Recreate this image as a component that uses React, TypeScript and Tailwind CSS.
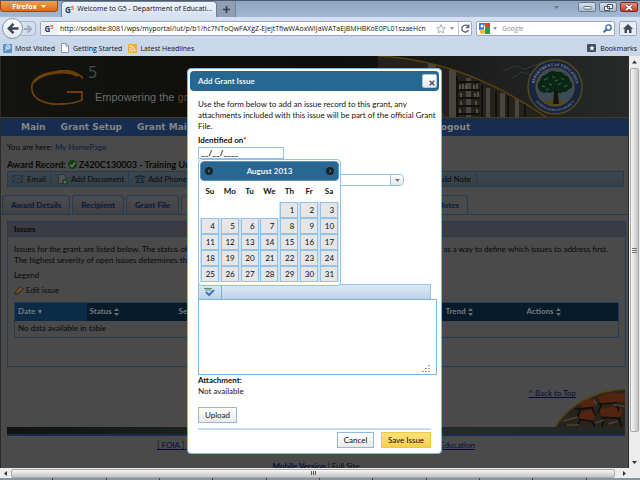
import { useState } from 'react';

const weekDays = ['Su', 'Mo', 'Tu', 'We', 'Th', 'Fr', 'Sa'];
const FIRST_WEEKDAY = 4;
const DAYS_IN_MONTH = 31;

const buildWeeks = () => {
  const weeks: (number | null)[][] = [];
  for (let start = 1 - FIRST_WEEKDAY; start <= DAYS_IN_MONTH; start += 7) {
    weeks.push(
      Array.from({ length: 7 }, (_, i) => {
        const day = start + i;
        return day >= 1 && day <= DAYS_IN_MONTH ? day : null;
      })
    );
  }
  return weeks;
};

const GLogo = () => (
  <span className="font-['Open_Sans',sans-serif] text-[8px] leading-3 font-bold text-[#1d3a6b]">
    G<sup className="text-[6px] leading-none text-[#e8641b]">5</sup>
  </span>
);

const FirefoxChrome = () => (
  <header className="shrink-0 bg-[#c9d7ea] font-['Open_Sans','Noto_Sans',sans-serif] text-[7px] text-[#111]">
    <div className="flex h-[17px] items-start border-t border-[#4d5a6b] bg-linear-to-b from-[#8ea5c1] to-[#a3b8d1]">
      <button className="flex h-[11px] w-[58px] shrink-0 items-center justify-center gap-1 rounded-b border border-t-0 border-[#9c4a10] bg-linear-to-b from-[#f0a04c] to-[#dd6a12] text-[7px] leading-none font-bold text-white">
        Firefox
        <svg className="h-[3px] w-[5px]" viewBox="0 0 5 3" fill="#fff"><path d="M0 0h5L2.5 3z" /></svg>
      </button>
      <div className="ml-[3px] flex h-4 w-[156px] shrink-0 items-center gap-[3px] overflow-hidden rounded-t border border-b-0 border-[#6d7f97] bg-linear-to-b from-[#eef3fa] to-[#d5e0f0] px-[3px] whitespace-nowrap">
        <GLogo />
        <span>Welcome to G5 - Department of Educati...</span>
      </div>
      <button aria-label="New tab" className="flex h-4 w-[19px] items-center justify-center border-r border-[#73839a] bg-[#8f9db5]">
        <svg className="h-[7px] w-[7px]" viewBox="0 0 7 7"><path d="M3.5 0v7M0 3.5h7" stroke="#333c4b" strokeWidth="1.5" /></svg>
      </button>
      <div className="ml-auto flex gap-[3px] pt-px pr-[2px]">
        <svg className="mt-1 mr-4 h-[3px] w-[5px]" viewBox="0 0 5 3" fill="#6a7480"><path d="M0 0h5L2.5 3z" /></svg>
        <button aria-label="Minimize" className="flex h-[10px] w-[18px] items-center justify-center rounded-xs border border-[#6c7c92] bg-linear-to-b from-[#d5dfeb] to-[#a9b9cd]">
          <svg className="h-[5px] w-[9px]" viewBox="0 0 9 5"><rect x="1" y="1.5" width="7" height="2.5" rx=".5" fill="#fff" stroke="#4b5563" strokeWidth=".8" /></svg>
        </button>
        <button aria-label="Restore" className="flex h-[10px] w-[18px] items-center justify-center rounded-xs border border-[#6c7c92] bg-linear-to-b from-[#d5dfeb] to-[#a9b9cd]">
          <svg className="h-[7px] w-[9px]" viewBox="0 0 9 7" fill="#fff" stroke="#4b5563"><path d="M3.5 .5h5v4h-5zM.5 2.5h5v4h-5z" /></svg>
        </button>
        <button aria-label="Close window" className="flex h-[10px] w-[18px] items-center justify-center rounded-xs border border-[#7c2b22] bg-linear-to-b from-[#e08d7b] to-[#c03a25]">
          <svg className="h-[7px] w-[8px]" viewBox="0 0 8 7"><path d="M1 1l6 5M7 1L1 6" stroke="#7b3028" strokeWidth="3" /><path d="M1 1l6 5M7 1L1 6" stroke="#fff" strokeWidth="1.7" /></svg>
        </button>
      </div>
    </div>

    <div className="flex h-[23px] items-center bg-linear-to-b from-[#d5e0f0] to-[#c9d7ea] px-[2px]">
      <button aria-label="Back" className="z-10 flex size-[21px] shrink-0 items-center justify-center rounded-full border border-[#8593a8] bg-linear-to-b from-white to-[#dfe7f1]">
        <svg className="h-[11px] w-[12px]" viewBox="0 0 12 11" fill="none" stroke="#3b4653" strokeWidth="2.4"><path d="M6.5 .8L1.8 5.5l4.7 4.7M2 5.5h9.5" /></svg>
      </button>
      <button aria-label="Forward" className="-ml-1 flex h-[15px] w-[17px] shrink-0 items-center justify-center rounded-r border border-[#a5b4c9] bg-[#d4dfee]">
        <svg className="h-[8px] w-[8px]" viewBox="0 0 8 8" fill="none" stroke="#9aabc2" strokeWidth="2"><path d="M3.5 .5L7 4 3.5 7.5M7 4H0" /></svg>
      </button>
      <div className="ml-1 flex h-[15px] min-w-0 flex-1 items-center rounded-xs border border-[#9aa9bf] bg-white">
        <span className="flex h-[13px] w-[16px] items-center justify-center bg-[#eef1f5]"><GLogo /></span>
        <input
          aria-label="Address"
          className="min-w-0 flex-1 pl-[3px] text-[7px] leading-3 outline-none"
          defaultValue="http://sodalite:8081/wps/myportal/!ut/p/b1/hc7NToQwFAXgZ-EJejtTflwWAoxWIJaWATaEjBMHBKoE0PL01szaeHcn"
        />
        <svg className="mx-1 h-[10px] w-[10px] shrink-0" viewBox="0 0 20 20"><path d="M10 1l2.700 6 6.300.6-4.800 4.200 1.500 6.400L10 15l-5.700 3.200 1.500-6.400L1 7.600l6.300-.6z" fill="#f2f4f6" stroke="#9ba3ab" strokeWidth="1.600" /></svg>
        <svg className="mr-1 h-[3px] w-[4px] shrink-0" viewBox="0 0 4 3" fill="#8b8f95"><path d="M0 0h4L2 3z" /></svg>
        <button aria-label="Reload" className="flex h-[13px] w-[13px] shrink-0 items-center justify-center border-l border-[#c1c9d4]">
          <svg className="h-[9px] w-[9px]" viewBox="0 0 9 9" fill="none" stroke="#5b626c" strokeWidth="1.3"><path d="M7.600 6A3.500 3.500 0 1 1 7 2.200M7.800 .5v3H5" /></svg>
        </button>
      </div>
      <div className="ml-1 flex h-[15px] w-[139px] shrink-0 items-center rounded-xs border border-[#9aa9bf] bg-white pr-[2px]">
        <svg className="ml-[2px] h-[11px] w-[11px] shrink-0" viewBox="0 0 11 11"><path fill="#e33b2e" d="M5 0h6v4H6z" /><path fill="#2f9a4a" d="M6 4h5v7H6z" /><path fill="#3c78d0" d="M0 0h5v7H0z" /><circle cx="3" cy="3" r="1.500" fill="#fff" /><circle cx="3.500" cy="8.500" r="2.500" fill="#f4b42c" /></svg>
        <svg className="mx-[3px] h-[3px] w-[4px] shrink-0" viewBox="0 0 4 3" fill="#8b8f95"><path d="M0 0h4L2 3z" /></svg>
        <input aria-label="Search" placeholder="Google" className="min-w-0 flex-1 pl-[2px] text-[7px] leading-3 italic outline-none placeholder:text-[#858b92]" />
        <svg className="h-[9px] w-[9px] shrink-0" viewBox="0 0 9 9" fill="none" stroke="#2f62a5"><circle cx="5.500" cy="3.500" r="2.700" strokeWidth="1.300" /><path d="M3.500 5.500L.6 8.400" strokeWidth="1.800" /></svg>
      </div>
      <button aria-label="Home" className="mr-px ml-1 flex h-[15px] w-[18px] shrink-0 items-center justify-center rounded-xs border border-[#9aa9bf] bg-[#e7edf5]">
        <svg className="h-[9px] w-[10px]" viewBox="0 0 10 9" fill="#454c56"><path d="M5 0l5 4.700H8.500V9h-2.500V6H4v3H1.500V4.700H0z" /></svg>
      </button>
    </div>

    <nav className="flex h-4 items-center gap-[6px] px-[3px] leading-none">
      <a href="#" className="flex items-center gap-[3px]">
        <svg className="h-[9px] w-[9px]" viewBox="0 0 9 9"><rect width="9" height="9" rx="1" fill="#5b95c8" /><path d="M2 7l2-3M6.500 2.500L4 4" stroke="#d9ebf8" /><circle cx="5" cy="3" r="2" fill="none" stroke="#e8f3fb" /></svg>
        Most Visited
      </a>
      <a href="#" className="flex items-center gap-1">
        <svg className="h-[10px] w-[8px]" viewBox="0 0 8 10"><path d="M.5.5H5L7.500 3v6.500h-7z" fill="#fff" stroke="#8d959f" /><path d="M5 .5V3h2.500" fill="none" stroke="#8d959f" /></svg>
        Getting Started
      </a>
      <a href="#" className="flex items-center gap-[3px]">
        <svg className="h-[9px] w-[9px]" viewBox="0 0 9 9"><rect width="9" height="9" rx="1" fill="#f0ab45" /><path d="M1.500 4.500a3 3 0 0 1 3 3M1.500 2a5.500 5.500 0 0 1 5.500 5.500" fill="none" stroke="#fff" /><circle cx="2" cy="7" r=".8" fill="#fff" /></svg>
        Latest Headlines
      </a>
      <a href="#" className="ml-auto flex items-center gap-1">
        <svg className="h-[8px] w-[9px]" viewBox="0 0 9 8"><rect width="9" height="8" rx="1" fill="#46505d" /><path d="M5 1.500l.8 1.700 1.800.2-1.400 1.200.5 1.900L5 5.500l-1.700 1 .5-1.900-1.400-1.200 1.800-.2z" fill="#fff" /></svg>
        Bookmarks
      </a>
    </nav>
  </header>
);

const Seal = () => (
  <svg className="absolute top-[3px] right-[45px] size-[56px]" viewBox="0 0 56 56">
    <defs>
      <path id="sealTop" d="M8.300 35.200A21 21 0 1 1 47.700 35.200" />
      <path id="sealBottom" d="M4 28a24 24 0 0 0 48 0" />
    </defs>
    <circle cx="28" cy="28" r="27" fill="#172541" stroke="#55481c" strokeWidth="1.500" />
    <circle cx="28" cy="28" r="19" fill="#3c4b57" stroke="#5b5230" />
    <text fontSize="4" fontWeight="bold" fill="#8a919c" fontFamily="Liberation Serif, serif">
      <textPath href="#sealTop" startOffset="50%" textAnchor="middle">DEPARTMENT OF EDUCATION</textPath>
    </text>
    <text fontSize="3" fontWeight="bold" fill="#7c8799" fontFamily="Liberation Serif, serif">
      <textPath href="#sealBottom" startOffset="50%" textAnchor="middle">UNITED STATES OF AMERICA</textPath>
    </text>
    <path d="M17 43q10-6 22 0l-4 2.500q-7 1.500-14 0z" fill="#55481c" />
    <path d="M26 45l1-12-6-6 1-1 6 4 1-6 1 6 6-4 1 1-6 6 1 12z" fill="#17130b" />
    <path d="M11 27c-1-4 3-5 3-8 2-4 6-3 8-6 4-2 6 0 9 0 4-1 6 3 9 4 3 2 2 5 5 7 1 4-1 6-4 7-2 3-5 1-7 3-3 1-4-2-6-3-2 2-5 4-8 2-4 2-9-1-9-6z" fill="#0b2514" />
    <path d="M17 21l4-2M25 17l3 2M34 19l3 2M15 27l3 1M22 25l3 1M31 26l3-2M37 28l3-2M28 22l3-1M19 31l3-1" stroke="#2b5634" strokeWidth="1.500" />
  </svg>
);

const Banner = () => (
  <div className="relative h-[61px] overflow-hidden bg-linear-to-r from-[#13130f] via-[#0d0d0d] to-[#1f2424]">
    <svg className="absolute top-[14px] left-[28px] h-[37px] w-[58px]" viewBox="0 0 58 37" fill="none" stroke="#6c4008">
      <path d="M54 8C46 1 36-1 26 2 11 4 1 10 3 20c1 10 15 15 29 14 8 0 15-1 21-4V22H38" strokeWidth="1.800" />
      <path d="M49 6C36-1 12 3 5 12" strokeWidth="2.500" />
    </svg>
    <span className="absolute top-[11px] left-[87px] font-['DejaVu_Sans',sans-serif] text-[15px] leading-3 text-[#42464a]">5</span>
    <p className="absolute top-[35px] left-[94px] font-['Liberation_Sans',sans-serif] text-[11px] leading-3 whitespace-nowrap text-[#6c6c6c]">
      Empowering the <span className="text-[#70420b]">grants</span>
    </p>
    <svg className="absolute top-0 right-0 h-[61px] w-[250px]" viewBox="0 0 250 61">
      <defs>
        <linearGradient id="wall" x1="0" x2="1"><stop offset="0" stopColor="#161614" /><stop offset="1" stopColor="#272a29" /></linearGradient>
        <clipPath id="shelf"><path d="M0 0q86 4 168 61H0z" /></clipPath>
      </defs>
      <rect width="250" height="61" fill="url(#wall)" />
      <g clipPath="url(#shelf)">
        <rect width="170" height="61" fill="#25221d" />
        <path d="M50 5h8v56h-8zM71 14h7v47h-7zM88 22h5v39h-5zM108 32h4v29h-4zM122 37h5v24h-5zM137 42h4v19h-4z" fill="#494641" />
        <path d="M63 15v46M79 20v41M104 29v32M118 35v26M130 40v21M147 46v15" stroke="#11100d" strokeWidth="2" />
        <path d="M80 26h22M80 34h22M80 42h22M80 50h22M80 58h22" stroke="#11100d" strokeWidth="2" />
        <path d="M82 29v4M85 28v5M88 29v4M96 29v4M99 28v5M83 37v4M97 37v4M100 36v5M83 45v4M98 45v4M82 53v4M99 53v4" stroke="#67604f" strokeWidth="1.500" />
        <path d="M50 32q8 12 16 29" stroke="#554218" fill="none" />
      </g>
      <path d="M0 0q86 4 168 61" fill="none" stroke="#56410e" strokeWidth="1.500" />
      <path d="M125 15l12-5 10 3 18-7M134 22l10-6 9 3" stroke="#343a3a" fill="none" />
    </svg>
    <Seal />
  </div>
);

const SortIcon = () => (
  <svg className="ml-[2px] inline h-[8px] w-[5px]" viewBox="0 0 5 8" fill="#666e73"><path d="M2.500 0L5 3H0zM0 5h5L2.500 8z" /></svg>
);

const G5Page = () => (
  <main className="min-h-full border-x border-[#2b2b2b] bg-[#4a4a4a] font-['Lato',sans-serif] text-[8px] leading-[11px] whitespace-nowrap text-[#080808]">
    <Banner />
    <nav className="flex h-[19px] items-center border-t border-[#4b3c18] bg-[#172d50] font-['DejaVu_Sans',sans-serif] text-[9px] font-bold text-[#858585]">
      <div className="flex w-[434px] shrink-0 gap-[15px] overflow-hidden pl-5">
        <a href="#">Main</a>
        <a href="#">Grant Setup</a>
        <a href="#">Grant Maintenance</a>
      </div>
      <a href="#">Logout</a>
    </nav>
    <p className="px-[6px] pt-[6px]">
      You are here: <a href="#" className="text-[#0b1c3f]">My HomePage</a>
    </p>
    <h1 className="flex items-center gap-[2px] px-[6px] pt-[6px] text-[9px] font-bold">
      Award Record:
      <svg className="h-[9px] w-[9px]" viewBox="0 0 9 9"><circle cx="4.500" cy="4.500" r="4.500" fill="#123d0e" /><path d="M2 4.700l2 2L7 2.500" fill="none" stroke="#6d776c" strokeWidth="1.300" /></svg>
      <span>Z420C130003 - Training University</span>
    </h1>

    <div className="mt-px mr-1 ml-[6px] flex h-[16px] border border-[#243b53] bg-linear-to-b from-[#3f464c] to-[#344047]">
      <div className="flex w-[419px] shrink-0 overflow-hidden">
        <button className="flex items-center gap-1 border-r border-[#243b53] px-1">
          <svg className="h-[8px] w-[11px]" viewBox="0 0 11 8" fill="none" stroke="#1f3448"><path d="M.5.5h10v7H.5zM.5.5l5 4 5-4M.5 7.500l3.500-4M10.500 7.500L7 3.500" /></svg>
          Email
        </button>
        <button className="flex items-center gap-[3px] border-r border-[#243b53] pr-1 pl-[7px]">
          <svg className="h-[11px] w-[10px]" viewBox="0 0 10 11"><path d="M.5.5h5l2 2v7h-7z" fill="#505456" stroke="#303436" /><circle cx="7" cy="8" r="2.800" fill="#26381b" /><path d="M7 6.500v3M5.500 8h3" stroke="#6d776c" /></svg>
          Add Document
        </button>
        <button className="flex items-center gap-[3px] pl-[6px]">
          <svg className="h-[8px] w-[10px]" viewBox="0 0 10 8" fill="#182838"><path d="M0 3V1.500Q5-1 10 1.500V3H7.500V2h-5v1z" /><path d="M2.500 3h5L9 8H1z" /><path d="M3.500 4.500h3M3.500 6h3" stroke="#55606a" strokeWidth=".8" /></svg>
          Add Phone Call
        </button>
      </div>
      <button className="w-[50px] border-r border-[#243b53] px-[5px] text-right">Add Note</button>
    </div>

    <div className="mt-2 flex items-end border-b border-[#243b53] pl-px font-bold text-[#0b1c3f]">
      <div className="flex w-[438px] shrink-0 items-end gap-[2px] overflow-hidden">
        {['Award Details', 'Recipient', 'Grant File'].map((tab) => (
          <button key={tab} className="h-[19px] shrink-0 rounded-t-sm border border-b-0 border-[#243b53] bg-linear-to-b from-[#4a4c4f] to-[#3f4144] px-2 font-black">{tab}</button>
        ))}
        <button className="h-[19px] shrink-0 rounded-t-sm border border-b-0 border-[#243b53] px-2 font-black">Issues</button>
      </div>
      <button className="h-[19px] w-[28px] rounded-tr-sm border-t border-r border-[#243b53] px-2 font-black">
        <span className="float-right">Notes</span>
      </button>
    </div>

    <section className="mt-[6px] mr-[2px] ml-[6px] h-[146px] border border-[#243b53]">
      <h2 className="h-[15px] border-b border-[#243b53] bg-[#3b3b45] px-[6px] leading-[15px] font-bold">Issues</h2>
      <div className="px-[6px] pt-[7px]">
        <div className="flex justify-between pr-[11px]">
          <span>Issues for the grant are listed below. The status of the issue</span>
          <span>can be used as a way to define which issues to address first.</span>
        </div>
        <p>The highest severity of open issues determines the grant status.</p>
        <p className="pt-1">Legend</p>
        <p className="flex items-center gap-[2px] pt-1">
          <svg className="h-[9px] w-[10px]" viewBox="0 0 10 9"><path d="M.5 8.500L2 5l5-4.500L9.500 3 4.500 7.500z" fill="#604319" stroke="#2c2010" strokeWidth=".7" /><path d="M3 6l4.500-4" stroke="#8a6c3b" /></svg>
          Edit issue
        </p>
        <table className="mt-[6px] w-full table-fixed border-collapse border border-[#243b53] text-left">
          <thead className="bg-[#081b2a] text-[#747b80]">
            <tr className="h-[18px]">
              <th className="w-[72px] bg-[#0b2b47] px-[3px]">
                Date <svg className="ml-px inline h-[4px] w-[4px]" viewBox="0 0 4 4" fill="#747b80"><path d="M0 0h4L2 4z" /></svg>
              </th>
              <th className="px-[3px]">Status<SortIcon /></th>
              <th className="px-[3px]">Severity<SortIcon /></th>
              <th className="px-[3px]">Identified<SortIcon /></th>
              <th className="px-[3px]">Resolved<SortIcon /></th>
              <th className="w-[81px] px-[3px]">Trend<SortIcon /></th>
              <th className="w-[95px] px-[3px]">Actions<SortIcon /></th>
            </tr>
          </thead>
          <tbody>
            <tr className="h-[17px]"><td colSpan={7} className="px-[3px]">No data available in table</td></tr>
          </tbody>
        </table>
      </div>
    </section>

    <footer className="pr-[3px] pl-[6px]">
      <div className="flex h-[60px] items-end justify-end">
        <a href="#" className="mb-[28px] text-[#070b38] underline">^ Back to Top</a>
        <svg className="-ml-[21px] h-[39px] w-[70px]" viewBox="0 0 70 40" preserveAspectRatio="none">
          <defs><clipPath id="arc"><path d="M0 40Q22 5 70 1v39z" /></clipPath></defs>
          <g clipPath="url(#arc)">
            <rect width="70" height="40" fill="#28241d" />
            <path d="M25 14l10-4 6 4-3 7-12-1zM43 9l14-5 8 3-2 8-16 2zM44 22l14-3 10 3-3 9-18-1zM24 25l12-3 5 5-4 7-12-2zM63 6h7v8h-7z" fill="#532410" />
            <path d="M20 22l18-2M26 20l-3 9M37 21l4 8M41 17l21-2M46 17l-3 9M61 15l3 9M46 30l20 1M49 31l-2 9M64 32l3 8M24 32l13 2M25 33l-3 7M37 34l3 6" fill="none" stroke="#0d0c0b" strokeWidth="1.500" />
            <path d="M8 34l14-4M39 12l3 6M58 17l12 2M40 36l9-3M53 37l10-3M12 38h12" stroke="#4d4431" strokeWidth="1.500" />
          </g>
          <path d="M0 40Q22 5 70 1" fill="none" stroke="#51410f" strokeWidth="1.500" />
        </svg>
      </div>
      <div className="h-[9px] border-b-2 border-[#172d50] bg-linear-to-r from-[#10130f] via-[#252d2d] to-[#202724]" />
      <div className="flex justify-between px-[150px] pt-1 text-[#070b38] underline">
        <span><a href="#">[ FOIA ]</a> <a href="#">[ Privacy ]</a></span>
        <a href="#">Department of Education</a>
      </div>
      <p className="pt-[10px] text-center">
        <a href="#" className="font-bold text-[#070b38] underline">Mobile Version</a> | Full Site
      </p>
    </footer>
  </main>
);

const DatePicker = ({ onPick }: { onPick: (day: number) => void }) => (
  <div className="absolute top-[12px] left-0 z-10 w-[143px] rounded-sm border border-[#94c0ec] bg-white p-px pb-[3px]">
    <div className="flex h-[20px] items-center justify-between rounded-sm border border-[#5d91b8] bg-[#286792] px-1 font-bold text-[#e9f1f7]">
      <button aria-label="Previous month" type="button">
        <svg className="size-[8px]" viewBox="0 0 8 8"><circle cx="4" cy="4" r="4" fill="#1d2226" /><path d="M4.700 2.500L3.200 4l1.500 1.500" stroke="#5689ab" fill="none" /></svg>
      </button>
      August 2013
      <button aria-label="Next month" type="button">
        <svg className="size-[8px]" viewBox="0 0 8 8"><circle cx="4" cy="4" r="4" fill="#1d2226" /><path d="M3.300 2.500L4.800 4 3.300 5.500" stroke="#5689ab" fill="none" /></svg>
      </button>
    </div>
    <table className="w-full table-fixed border-collapse">
      <thead>
        <tr className="h-[21px]">
          {weekDays.map((day) => <th key={day} className="p-0 font-bold text-[#111]">{day}</th>)}
        </tr>
      </thead>
      <tbody>
        {buildWeeks().map((week, i) => (
          <tr key={i}>
            {week.map((day, j) => (
              <td key={j} className={day ? 'h-[16px] bg-[#cfe1f6] p-0' : 'h-[16px] p-0'}>
                {day && (
                  <button type="button" onClick={() => onPick(day)} className="mx-auto block h-[16px] w-[18px] border border-[#94c0ec] bg-[#e6e6e6] pr-[3px] text-right leading-[14px]">
                    {day}
                  </button>
                )}
              </td>
            ))}
          </tr>
        ))}
      </tbody>
    </table>
  </div>
);

const AddIssueDialog = () => {
  const [date, setDate] = useState('__/__/____');

  const pickDay = (day: number) => setDate(`08/${String(day).padStart(2, '0')}/2013`);

  return (
    <div className="absolute inset-x-0 top-[12px] flex justify-center font-['Lato',sans-serif] text-[8px] leading-[11px] text-[#111]">
      <form role="dialog" aria-label="Add Grant Issue" className="w-[255px] rounded border border-[#7db4e8] bg-white p-[2px] pb-[5px]">
        <div className="flex h-[20px] items-center justify-between rounded-sm bg-[#286792] pr-[2px] pl-2">
          <h2 className="font-bold text-[#e9f1f7]">Add Grant Issue</h2>
          <button type="button" aria-label="Close" className="flex h-[14px] w-[15px] items-end justify-end rounded-xs border border-[#a6c9e2] bg-linear-to-b from-white to-[#e4e6e8] p-px">
            <svg className="h-[6px] w-[6px]" viewBox="0 0 6 6"><path d="M.7.7l4.600 4.600M5.300.7L.7 5.300" stroke="#555" strokeWidth="1.500" /></svg>
          </button>
        </div>
        <div className="px-2 pt-2">
          <p className="-mr-2">
            Use the form below to add an issue record to this grant, any attachments included with this issue will be part of the official Grant File.
          </p>
          <label htmlFor="identified" className="mt-[3px] block font-bold">
            Identified on<span className="text-[#e00]">*</span>
          </label>
          <div className="relative mt-px">
            <input
              id="identified"
              value={date}
              onChange={(e) => setDate(e.target.value)}
              className="block h-[12px] w-[86px] border border-[#94c0ec] px-[2px] leading-[10px] font-bold outline-none"
            />
            <DatePicker onPick={pickDay} />
          </div>
          <div className="relative mt-[15px] h-[12px] w-[206px]">
            <select aria-label="Severity" className="h-full w-full appearance-none rounded-sm border border-[#94c0ec] bg-white" />
            <span className="pointer-events-none absolute inset-y-px right-px flex w-[13px] items-center justify-center rounded-r-sm border-l border-[#94c0ec] bg-linear-to-b from-white to-[#e4e6e8]">
              <svg className="h-[3px] w-[5px]" viewBox="0 0 5 3" fill="#777"><path d="M0 0h5L2.500 3z" /></svg>
            </span>
          </div>
          <div className="mt-[98px] flex h-[15px] border border-b-0 border-[#94c0ec] bg-linear-to-b from-[#dce8f4] to-[#bcd2e8]">
            <button type="button" aria-label="Check spelling" className="w-[23px] border-r border-[#79aedf] pl-[4px]">
              <svg className="h-[10px] w-[12px]" viewBox="0 0 12 10"><path d="M1 1.500h8M2 3h6" stroke="#579276" /><path d="M3 5l3 3 5-5" fill="none" stroke="#3979b7" strokeWidth="2" /></svg>
            </button>
          </div>
          <textarea aria-label="Issue description" className="-mr-[3px] block h-[76px] w-[239px] resize-none border border-[#79b4ea] outline-none" />
          <svg className="pointer-events-none relative -top-[10px] mr-px -mb-[8px] ml-auto block h-[8px] w-[8px]" viewBox="0 0 8 8" fill="#999"><path d="M6 0h2v1H6zM3 3h2v1H3zM6 3h2v1H6zM0 6h2v1H0zM3 6h2v1H3zM6 6h2v1H6z" /></svg>
          <p className="font-bold">Attachment:</p>
          <p>Not available</p>
          <button type="button" className="mt-[10px] block h-[16px] w-[39px] border border-[#94b9d8] bg-linear-to-b from-white to-[#e9e9e9]">Upload</button>
          <div className="mt-[5px] flex justify-end gap-[7px] border-t-2 border-[#c8def4] pt-[2px]">
            <button type="button" className="h-[16px] w-[37px] border border-[#94b9d8] bg-linear-to-b from-white to-[#e9e9e9]">Cancel</button>
            <button type="submit" className="h-[16px] w-[50px] border border-[#f0c93c] bg-linear-to-b from-[#f9e07a] to-[#f5d04a]">Save Issue</button>
          </div>
        </div>
      </form>
    </div>
  );
};

export default function App() {
  return (
    <div className="flex h-screen flex-col overflow-hidden">
      <FirefoxChrome />
      <div className="flex min-h-0 flex-1">
        <div className="relative min-w-0 flex-1 overflow-hidden">
          <G5Page />
          <AddIssueDialog />
        </div>
        <div className="flex w-[11px] shrink-0 flex-col items-center bg-[#ececec]">
          <svg className="h-[12px] w-[5px]" viewBox="0 0 5 12"><path d="M0 7.500h5L2.500 4.500z" fill="#333" /></svg>
          <div className="mb-[29px] flex w-[9px] flex-1 items-center justify-center rounded-xs border border-[#aaa] bg-linear-to-r from-[#f7f7f7] to-[#c4c4c4]">
            <svg className="h-[5px] w-[5px]" viewBox="0 0 5 5"><path d="M0 .5h5M0 2.500h5M0 4.500h5" stroke="#777" /></svg>
          </div>
          <svg className="mb-[4px] h-[3px] w-[5px]" viewBox="0 0 5 3"><path d="M0 0h5L2.500 3z" fill="#333" /></svg>
        </div>
      </div>
      <div className="flex h-[10px] shrink-0 items-center bg-[#ececec]">
        <svg className="mx-[4px] h-[5px] w-[3px]" viewBox="0 0 3 5"><path d="M3 0v5L0 2.500z" fill="#333" /></svg>
        <div className="flex h-[9px] flex-1 items-center justify-center rounded-xs border border-[#aaa] bg-linear-to-b from-[#f7f7f7] to-[#c4c4c4]">
          <svg className="h-[4px] w-[5px]" viewBox="0 0 5 4"><path d="M.5 0v4M2.500 0v4M4.500 0v4" stroke="#555" /></svg>
        </div>
        <svg className="mr-[14px] ml-[8px] h-[5px] w-[3px]" viewBox="0 0 3 5"><path d="M0 0v5l3-2.500z" fill="#333" /></svg>
      </div>
      <div className="grid h-[2px] shrink-0 grid-cols-12 divide-x divide-[#444] bg-[#8e949c]">
        {Array.from({ length: 12 }, (_, i) => <span key={i} />)}
      </div>
    </div>
  );
}
